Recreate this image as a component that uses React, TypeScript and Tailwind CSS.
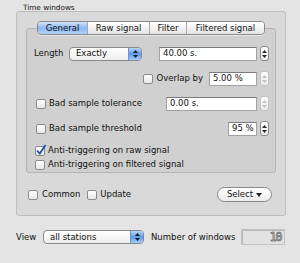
import React from "react";

const Arrows = ({ color = "#1c1c1c" }: { color?: string }) => (
  <div className="flex flex-col items-center gap-[2px]">
    <svg width="5" height="3" viewBox="0 0 5 3">
      <path d="M0 3 L2.5 0 L5 3Z" fill={color} />
    </svg>
    <svg width="5" height="3" viewBox="0 0 5 3">
      <path d="M0 0 L2.5 3 L5 0Z" fill={color} />
    </svg>
  </div>
);

const Stepper = ({ disabled }: { disabled?: boolean }) => (
  <div
    className={`ml-[3px] flex h-[15px] w-[9px] items-center justify-center rounded-[3px] border bg-linear-to-b from-white to-[#ececec] ${
      disabled ? "border-[#c4c4c4]" : "border-[#8a8a8a]"
    }`}
  >
    <Arrows color={disabled ? "#c2c2c2" : "#2a2a2a"} />
  </div>
);

const Field = ({ value, w }: { value: string; w: string }) => (
  <div
    className={`flex h-[14px] items-center overflow-hidden whitespace-nowrap border border-[#a2a2a2] border-t-[#7a7a7a] bg-white px-[3px] text-[#111] ${w}`}
  >
    {value}
  </div>
);

const Check = ({ checked }: { checked?: boolean }) => (
  <div className="relative h-[10px] w-[10px] shrink-0 rounded-[2px] border border-[#8c8c8c] bg-linear-to-b from-white to-[#e6e6e6]">
    {checked && (
      <svg className="absolute -left-[1px] -top-[3px]" width="12" height="12" viewBox="0 0 12 12">
        <path d="M2 6.5 L4.8 9.5 L10.5 1" stroke="#1d4fb0" strokeWidth="1.8" fill="none" />
      </svg>
    )}
  </div>
);

const PopUp = ({ label, w }: { label: string; w: string }) => (
  <div
    className={`flex h-[14px] items-center rounded-[4px] border border-[#8a8a8a] bg-linear-to-b from-white to-[#eeeeee] pl-[6px] text-[#111] ${w}`}
  >
    <span>{label}</span>
    <div className="ml-auto flex h-full w-[13px] items-center justify-center rounded-r-[3px] border-l border-[#6e8fc4] bg-linear-to-b from-[#b9d6fa] via-[#5c98ea] to-[#a3cdfa]">
      <Arrows />
    </div>
  </div>
);

const tabs = [
  { name: "General", w: "w-[49px]" },
  { name: "Raw signal", w: "w-[62px]" },
  { name: "Filter", w: "w-[37px]" },
  { name: "Filtered signal", w: "w-[78px]" },
];

export default function App() {
  return (
    <div className="h-[263px] w-[300px] overflow-hidden bg-[#e4e4e4] font-['DejaVu_Sans',sans-serif] text-[8.5px] leading-none text-[#111]">
      <div className="h-[11px] pl-[23px] pt-[3.5px] text-[7.3px]">Time windows</div>
      <div className="ml-[16px] w-[270px] rounded-[3px] border border-[#bdbdbd] bg-[#d9d9d9] px-[9px] pb-[13px] pt-[9px]">
        <div className="relative z-10 flex justify-center">
          <div className="flex h-[14px] overflow-hidden rounded-[4px] border border-[#8a8a8a] shadow-[0_1px_0_rgba(255,255,255,0.5)]">
            {tabs.map((t, i) => (
              <div
                key={t.name}
                className={`flex items-center justify-center ${t.w} ${
                  i > 0 ? "border-l border-[#a8a8a8]" : ""
                } ${
                  i === 0
                    ? "bg-linear-to-b from-[#d3e4fa] via-[#8ab6f0] to-[#b4d3f8]"
                    : "bg-linear-to-b from-white via-[#f3f3f3] to-[#e4e4e4]"
                }`}
              >
                {t.name}
              </div>
            ))}
          </div>
        </div>
        <div className="-mt-[7px] flex flex-col rounded-[3px] border border-[#b3b3b3] bg-[#d0d0d0] pb-[1px] pl-[7px] pr-[6px] pt-[17px]">
          <div className="flex h-[15px] items-center">
            <span className="w-[35px]">Length</span>
            <PopUp label="Exactly" w="w-[73px]" />
            <div className="ml-auto flex items-center">
              <Field value="40.00 s." w="w-[98px]" />
              <Stepper />
            </div>
          </div>
          <div className="mt-[10px] flex h-[15px] items-center justify-end">
            <Check />
            <span className="ml-[3px]">Overlap by</span>
            <div className="ml-[6px]">
              <Field value="5.00 %" w="w-[48px]" />
            </div>
            <Stepper disabled />
          </div>
          <div className="mt-[10px] flex h-[15px] items-center">
            <div className="ml-[2px]">
              <Check />
            </div>
            <span className="ml-[3px]">Bad sample tolerance</span>
            <div className="ml-auto flex items-center">
              <Field value="0.00 s." w="w-[91px]" />
              <Stepper disabled />
            </div>
          </div>
          <div className="mt-[10px] flex h-[15px] items-center">
            <div className="ml-[2px]">
              <Check />
            </div>
            <span className="ml-[3px]">Bad sample threshold</span>
            <div className="ml-auto flex items-center">
              <Field value="95 %" w="w-[29px]" />
              <Stepper />
            </div>
          </div>
          <div className="mt-[8px] flex h-[13px] items-center">
            <div className="ml-[1px]">
              <Check checked />
            </div>
            <span className="ml-[3px]">Anti-triggering on raw signal</span>
          </div>
          <div className="mt-[1px] flex h-[13px] items-center">
            <div className="ml-[1px]">
              <Check />
            </div>
            <span className="ml-[3px]">Anti-triggering on filtered signal</span>
          </div>
        </div>
        <div className="mt-[14px] flex h-[15px] items-center pl-[2px] pr-[4px]">
          <Check />
          <span className="ml-[4px]">Common</span>
          <div className="ml-[7px]">
            <Check />
          </div>
          <span className="ml-[3px]">Update</span>
          <div className="ml-auto flex h-[15px] w-[55px] items-center justify-center gap-[3px] rounded-full border border-[#8a8a8a] bg-linear-to-b from-white to-[#ebebeb]">
            <span>Select</span>
            <svg width="6" height="4" viewBox="0 0 6 4">
              <path d="M0 0 L3 4 L6 0Z" fill="#222" />
            </svg>
          </div>
        </div>
      </div>
      <div className="mt-[13px] flex h-[16px] items-center pl-[16px]">
        <span className="w-[27px]">View</span>
        <PopUp label="all stations" w="w-[101px]" />
        <span className="ml-[7px]">Number of windows</span>
        <div className="ml-auto mr-[15px] flex h-[16px] w-[44px] items-center justify-end border border-[#c2c2c2] bg-[#e2e2e2] pr-[3px] shadow-[inset_1px_1px_0_#b8b8b8]">
          <span className="font-['DejaVu_Sans_Mono',monospace] text-[12px] tracking-[-1.5px] text-transparent [-webkit-text-stroke:0.5px_#333]">
            10
          </span>
        </div>
      </div>
    </div>
  );
}
